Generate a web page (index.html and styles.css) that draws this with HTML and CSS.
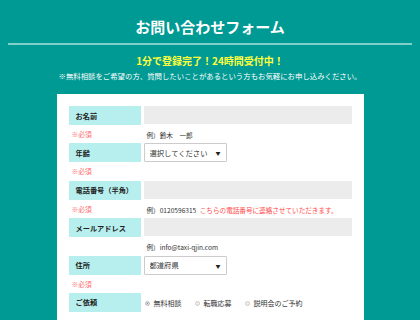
FILE: index.html
```html
<!DOCTYPE html>
<html>
<head>
<meta charset="utf-8">
<title>お問い合わせフォーム</title>
<link rel="stylesheet" href="styles.css">
</head>
<body>
<div class="head">
  <h1>お問い合わせフォーム</h1>
  <p class="catch">1分で登録完了！24時間受付中！</p>
  <p class="lead">※無料相談をご希望の方、質問したいことがあるという方もお気軽にお申し込みください。</p>
</div>

<form class="panel" method="post" action="/">
  <div class="field">
    <label class="key" for="name">お名前</label>
    <input id="name" class="text" type="text" name="name">
    <span class="req">※必須</span>
    <span class="eg">例）鈴木　一郎</span>
  </div>
  <div class="field">
    <label class="key" for="age">年齢</label>
    <span class="select"><select id="age" name="age"><option>選択してください</option></select></span>
    <span class="req">※必須</span>
    <span class="eg"></span>
  </div>
  <div class="field">
    <label class="key" for="tel">電話番号（半角）</label>
    <input id="tel" class="text" type="text" name="tel">
    <span class="req">※必須</span>
    <span class="eg">例）0120596315 <em>こちらの電話番号に連絡させていただきます。</em></span>
  </div>
  <div class="field">
    <label class="key" for="mail">メールアドレス</label>
    <input id="mail" class="text" type="text" name="mail">
    <span class="req"></span>
    <span class="eg">例）info@taxi-qjin.com</span>
  </div>
  <div class="field">
    <label class="key" for="pref">住所</label>
    <span class="select"><select id="pref" name="pref"><option>都道府県</option></select></span>
    <span class="req">※必須</span>
    <span class="eg"></span>
  </div>
  <div class="field">
    <span class="key">ご依頼</span>
    <div class="radios">
      <label><input type="radio" name="kind" checked>無料相談</label>
      <label><input type="radio" name="kind">転職応募</label>
      <label><input type="radio" name="kind">説明会のご予約</label>
    </div>
  </div>
</form>
</body>
</html>
```

FILE: styles.css
```css
body { margin: 0; background: #009a94; font-family: "Noto Sans CJK JP", "Liberation Sans", sans-serif; color: #333; }
.head { text-align: center; }
h1 { margin: 0 8px; padding: 17px 0 6px; border-bottom: 2px solid #7fcfcb; font-size: 15px; line-height: 20px; font-weight: bold; color: white; }
.catch { margin: 9px 0 0; font-size: 10px; line-height: 14px; font-weight: bold; color: #ffff3c; }
.lead { margin: 2px 0 0; font-size: 7.4px; line-height: 12px; color: white; }
.panel { width: 283px; margin: 12px auto 0; padding: 12px; background: white; }
.field { display: grid; grid-template-columns: 72px 208px; column-gap: 3px; grid-template-rows: 19px 18.4px; }
.key { display: flex; align-items: center; padding-left: 7px; background: #b6efed; font-size: 7.2px; font-weight: bold; color: #222; }
.text { box-sizing: border-box; width: 208px; height: 18px; margin: 0; border: 0; background: #ececec; }
.req { padding-left: 3px; font-size: 6.8px; line-height: 18.4px; color: #ff6b6b; }
.eg { padding: 4px 0 0 3px; font-size: 6.6px; line-height: 12px; color: #333; white-space: nowrap; }
.eg em { margin-left: 2px; font-style: normal; color: #ff4a4a; }
.select { position: relative; display: block; width: 83px; height: 19px; }
.select select { display: block; box-sizing: border-box; width: 83px; height: 19px; margin: 0; padding: 0 0 0 5px; border: 1px solid #ccc; border-radius: 1px; background: white; font: 7.3px "Noto Sans CJK JP", sans-serif; color: #333; appearance: none; -webkit-appearance: none; }
.select::after { content: "▼"; position: absolute; right: 6px; top: 6px; font-size: 5px; line-height: 8px; color: #222; pointer-events: none; }
.radios { display: flex; align-items: center; gap: 13px; padding: 2px 0 0 1px; font-size: 7px; color: #333; }
.radios label { display: flex; align-items: center; gap: 4px; }
.radios input { width: 5px; height: 5px; margin: 0; border: 1px solid #ccc; border-radius: 50%; background: #eee; appearance: none; -webkit-appearance: none; }
.radios input:checked { background: #666; box-shadow: inset 0 0 0 1px #eee; }
```
